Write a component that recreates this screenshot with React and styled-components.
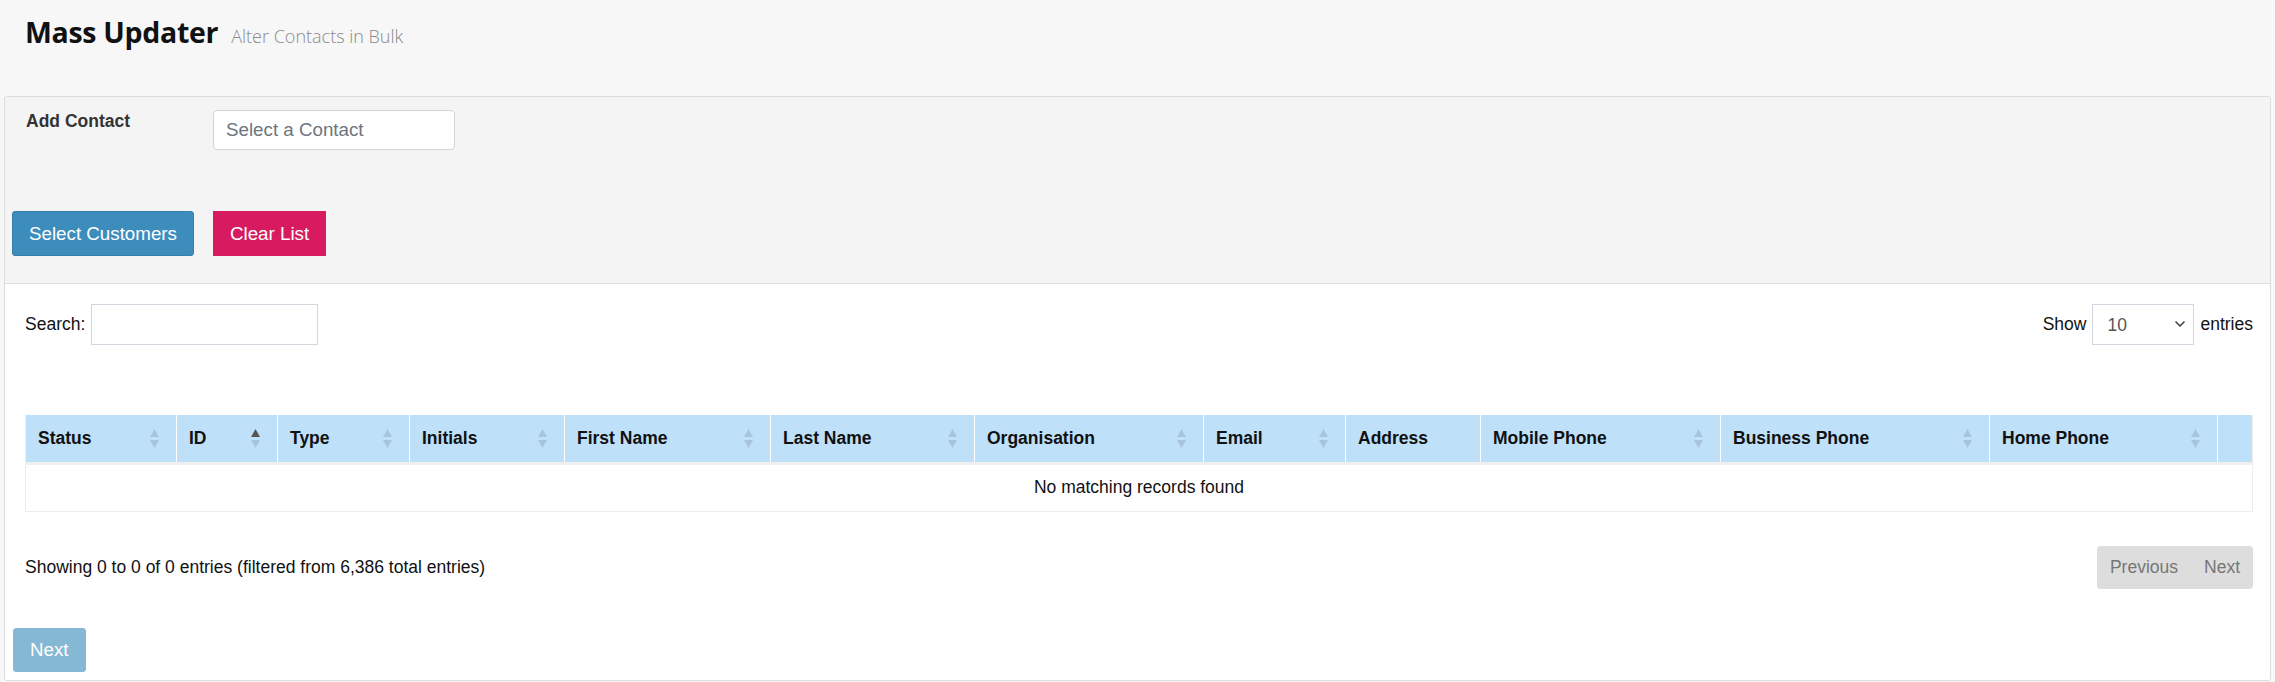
import styled, { createGlobalStyle } from 'styled-components'
import { ChevronDown } from 'lucide-react'

const GlobalStyle = createGlobalStyle`
  html, body {
    margin: 0;
    padding: 0;
    background: #f7f7f7;
    font-family: "Liberation Sans", Arial, sans-serif;
    color: #222;
  }
  * {
    box-sizing: border-box;
  }
`

const columns = [
  { title: 'Status', width: 151, sort: 'both' },
  { title: 'ID', width: 101, sort: 'asc' },
  { title: 'Type', width: 132, sort: 'both' },
  { title: 'Initials', width: 155, sort: 'both' },
  { title: 'First Name', width: 206, sort: 'both' },
  { title: 'Last Name', width: 204, sort: 'both' },
  { title: 'Organisation', width: 229, sort: 'both' },
  { title: 'Email', width: 142, sort: 'both' },
  { title: 'Address', width: 135 },
  { title: 'Mobile Phone', width: 240, sort: 'both' },
  { title: 'Business Phone', width: 269, sort: 'both' },
  { title: 'Home Phone', width: 228, sort: 'both' },
  { title: '', width: 35 },
]

const SortIcon = ({ dir }) => (
  <svg width="9" height="19" viewBox="0 0 9 19">
    <polygon points="0,8 4.5,0 9,8" fill={dir === 'asc' ? '#555' : '#a8c4db'} />
    <polygon points="0,11 4.5,19 9,11" fill="#a8c4db" />
  </svg>
)

const App = () => (
  <>
    <GlobalStyle />
    <PageHeader>
      <Title>Mass Updater</Title>
      <SubTitle>Alter Contacts in Bulk</SubTitle>
    </PageHeader>

    <Panel>
      <PanelTop>
        <FormRow>
          <FieldLabel>Add Contact</FieldLabel>
          <ContactInput placeholder="Select a Contact" />
        </FormRow>
        <ButtonRow>
          <Button $variant="primary">Select Customers</Button>
          <Button $variant="danger">Clear List</Button>
        </ButtonRow>
      </PanelTop>

      <PanelBody>
        <TableControls>
          <ControlLabel>
            Search:
            <SearchInput type="search" />
          </ControlLabel>
          <ControlLabel>
            Show
            <SelectWrap>
              <LengthSelect defaultValue="10">
                <option value="10">10</option>
                <option value="25">25</option>
                <option value="50">50</option>
                <option value="100">100</option>
              </LengthSelect>
              <Chevron>
                <ChevronDown size={16} strokeWidth={2.5} />
              </Chevron>
            </SelectWrap>
            entries
          </ControlLabel>
        </TableControls>

        <Table>
          <colgroup>
            {columns.map((c, i) => (
              <col key={i} style={{ width: c.width }} />
            ))}
          </colgroup>
          <thead>
            <tr>
              {columns.map((c, i) => (
                <Th key={i}>
                  <ThInner>
                    <span>{c.title}</span>
                    {c.sort && <SortIcon dir={c.sort} />}
                  </ThInner>
                </Th>
              ))}
            </tr>
          </thead>
          <tbody>
            <tr>
              <EmptyCell colSpan={columns.length}>No matching records found</EmptyCell>
            </tr>
          </tbody>
        </Table>

        <TableFooter>
          <Info>Showing 0 to 0 of 0 entries (filtered from 6,386 total entries)</Info>
          <Pager>
            <PageButton>Previous</PageButton>
            <PageButton>Next</PageButton>
          </Pager>
        </TableFooter>
      </PanelBody>

      <PanelFooter>
        <Button $variant="primary" disabled>
          Next
        </Button>
      </PanelFooter>
    </Panel>
  </>
)

export default App

const PageHeader = styled.div`
  display: flex;
  align-items: baseline;
  padding: 13px 25px 0;
  height: 96px;
`

const Title = styled.h1`
  margin: 0;
  font-family: "Open Sans", sans-serif;
  font-weight: 700;
  font-size: 28.5px;
  letter-spacing: -0.3px;
  color: #111;
`

const SubTitle = styled.small`
  margin-left: 13px;
  font-family: "Open Sans", sans-serif;
  font-weight: 300;
  font-size: 18px;
  color: #8a8a8a;
`

const Panel = styled.div`
  margin: 0 4px;
  border: 1px solid #ddd;
  border-radius: 3px;
  background: #fff;
  overflow: hidden;
`

const PanelTop = styled.div`
  background: #f4f4f4;
  border-bottom: 1px solid #ddd;
  padding: 13px 0 27px 7px;
`

const FormRow = styled.div`
  display: grid;
  grid-template-columns: 187px 242px;
  align-items: start;
  padding-left: 14px;
`

const FieldLabel = styled.label`
  font-weight: 700;
  font-size: 17.5px;
  color: #333;
  padding-top: 1px;
`

const ContactInput = styled.input`
  height: 40px;
  border: 1px solid #ced4da;
  border-radius: 4px;
  padding: 0 12px;
  font-family: "Liberation Sans", Arial, sans-serif;
  font-size: 18.75px;
  color: #495057;
  background: #fff;
  outline: none;

  &::placeholder {
    color: #6c757d;
  }
`

const ButtonRow = styled.div`
  display: flex;
  gap: 19px;
  margin-top: 61px;
`

const Button = styled.button`
  height: 45px;
  padding: 0 16px;
  font-family: "Liberation Sans", Arial, sans-serif;
  font-size: 18.75px;
  color: #fff;
  cursor: pointer;
  border: 1px solid
    ${(p) => (p.$variant === 'danger' ? '#d81b60' : '#367fa9')};
  border-radius: ${(p) => (p.$variant === 'danger' ? '0' : '3px')};
  background: ${(p) => (p.$variant === 'danger' ? '#d81b60' : '#3c8dbc')};

  &:disabled {
    height: 44px;
    opacity: 0.62;
    cursor: default;
    border-color: #3c8dbc;
  }
`

const PanelBody = styled.div`
  padding: 20px 17px 0 20px;
`

const TableControls = styled.div`
  display: flex;
  justify-content: space-between;
  align-items: center;
  margin-bottom: 70px;
`

const ControlLabel = styled.label`
  display: flex;
  align-items: center;
  gap: 6px;
  font-size: 17.5px;
  color: #111;
`

const SearchInput = styled.input`
  width: 227px;
  height: 41px;
  border: 1px solid #d2d6de;
  border-radius: 0;
  padding: 0 10px;
  font-family: inherit;
  font-size: 17.5px;
  outline: none;
  -webkit-appearance: none;
`

const SelectWrap = styled.div`
  position: relative;
  display: flex;
`

const LengthSelect = styled.select`
  width: 102px;
  height: 41px;
  border: 1px solid #d2d6de;
  border-radius: 0;
  padding: 0 14px;
  background: #fff;
  font-family: inherit;
  font-size: 17.5px;
  color: #555;
  appearance: none;
  outline: none;
`

const Chevron = styled.span`
  position: absolute;
  right: 6px;
  top: 12px;
  color: #444;
  pointer-events: none;
  display: flex;
`

const Table = styled.table`
  width: 100%;
  table-layout: fixed;
  border-collapse: collapse;
  font-size: 17.5px;
  border-left: 1px solid #eee;
  border-right: 1px solid #eee;
`

const Th = styled.th`
  height: 48px;
  padding: 0 17px 0 12px;
  background: #bee0f9;
  border-left: 1px solid #fff;
  border-bottom: 3px solid #f0f0f0;
  text-align: left;
  font-weight: 700;
  color: #111;
  white-space: nowrap;

  &:first-child {
    border-left: none;
  }
`

const ThInner = styled.div`
  display: flex;
  align-items: center;
  justify-content: space-between;
`

const EmptyCell = styled.td`
  height: 48px;
  text-align: center;
  color: #111;
  border-bottom: 1px solid #eee;
`

const TableFooter = styled.div`
  display: flex;
  justify-content: space-between;
  align-items: center;
  margin-top: 34px;
`

const Info = styled.div`
  font-size: 17.5px;
  color: #111;
`

const Pager = styled.div`
  display: flex;
  background: #ddd;
  border-radius: 4px;
  height: 43px;
`

const PageButton = styled.span`
  display: flex;
  align-items: center;
  padding: 0 13px;
  font-size: 17.5px;
  color: #777;
`

const PanelFooter = styled.div`
  padding: 39px 0 8px 8px;
`
